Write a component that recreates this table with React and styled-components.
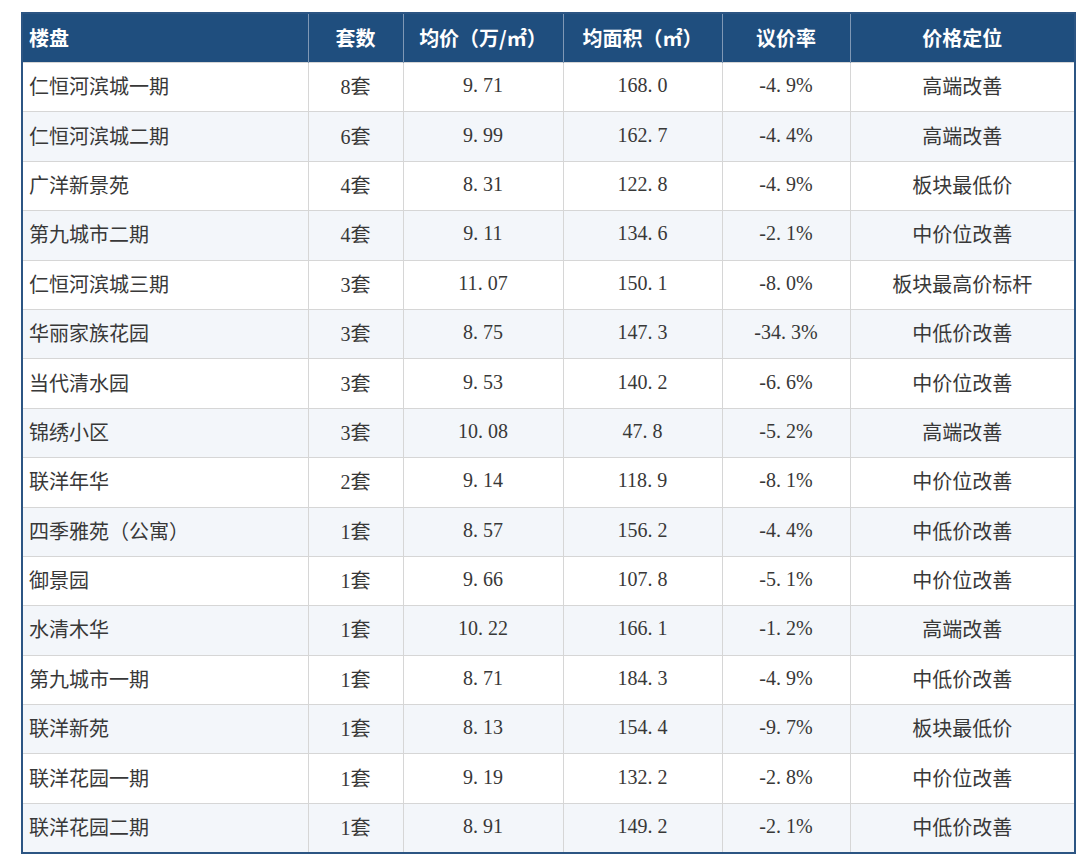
import React from "react";
import styled, { createGlobalStyle } from "styled-components";

const GlobalStyle = createGlobalStyle`
  body {
    margin: 0;
    background: #fff;
  }
`;

const Page = styled.div`
  padding: 12px 0 0 21px;
`;

const Table = styled.table`
  width: 1053px;
  table-layout: fixed;
  border-collapse: collapse;
  border: 2px solid #2c5583;
`;

const HeadCell = styled.th`
  height: 46px;
  padding: 0 6px 2px;
  background: #1f4e7e;
  color: #fff;
  font-family: "Noto Sans CJK SC", "Liberation Sans", sans-serif;
  font-weight: 700;
  font-size: 20px;
  text-align: ${(p) => (p.$left ? "left" : "center")};
  border-left: 1px solid #7f98b5;
  &:first-child {
    border-left: none;
  }
`;

const Row = styled.tr`
  height: 49.4px;
  background: ${(p) => (p.$alt ? "#f3f6fa" : "#fff")};
`;

const Cell = styled.td`
  padding: 0 6px 3px;
  border: 1px solid #d6d6d6;
  color: #383838;
  font-size: 20px;
  text-align: ${(p) => (p.$left ? "left" : "center")};
  font-family: ${(p) =>
    p.$num
      ? `"Liberation Serif", "Noto Sans CJK SC", serif`
      : `"Noto Sans CJK SC", "Liberation Serif", serif`};
  white-space: nowrap;
`;

const Count = styled.span`
  font-family: "Liberation Serif", "Noto Sans CJK SC", serif;
`;

// 宋体的半角小数点占一整格，这里补一点右边距
const Dot = styled.span`
  margin-right: 5px;
`;

const Num = ({ value }) => {
  const [head, tail] = value.split(".");
  return (
    <>
      {head}
      <Dot>.</Dot>
      {tail}
    </>
  );
};

const columns = [
  { title: "楼盘", width: 286, left: true },
  { title: "套数", width: 95 },
  { title: "均价（万/㎡）", width: 160 },
  { title: "均面积（㎡）", width: 159 },
  { title: "议价率", width: 128 },
  { title: "价格定位", width: 225 },
];

const rows = [
  ["仁恒河滨城一期", 8, "9.71", "168.0", "-4.9%", "高端改善"],
  ["仁恒河滨城二期", 6, "9.99", "162.7", "-4.4%", "高端改善"],
  ["广洋新景苑", 4, "8.31", "122.8", "-4.9%", "板块最低价"],
  ["第九城市二期", 4, "9.11", "134.6", "-2.1%", "中价位改善"],
  ["仁恒河滨城三期", 3, "11.07", "150.1", "-8.0%", "板块最高价标杆"],
  ["华丽家族花园", 3, "8.75", "147.3", "-34.3%", "中低价改善"],
  ["当代清水园", 3, "9.53", "140.2", "-6.6%", "中价位改善"],
  ["锦绣小区", 3, "10.08", "47.8", "-5.2%", "高端改善"],
  ["联洋年华", 2, "9.14", "118.9", "-8.1%", "中价位改善"],
  ["四季雅苑（公寓）", 1, "8.57", "156.2", "-4.4%", "中低价改善"],
  ["御景园", 1, "9.66", "107.8", "-5.1%", "中价位改善"],
  ["水清木华", 1, "10.22", "166.1", "-1.2%", "高端改善"],
  ["第九城市一期", 1, "8.71", "184.3", "-4.9%", "中低价改善"],
  ["联洋新苑", 1, "8.13", "154.4", "-9.7%", "板块最低价"],
  ["联洋花园一期", 1, "9.19", "132.2", "-2.8%", "中价位改善"],
  ["联洋花园二期", 1, "8.91", "149.2", "-2.1%", "中低价改善"],
];

const App = () => {
  return (
    <Page>
      <GlobalStyle />
      <Table>
        <colgroup>
          {columns.map((c) => (
            <col key={c.title} style={{ width: c.width }} />
          ))}
        </colgroup>
        <thead>
          <tr>
            {columns.map((c) => (
              <HeadCell key={c.title} $left={c.left}>
                {c.title}
              </HeadCell>
            ))}
          </tr>
        </thead>
        <tbody>
          {rows.map(([name, count, price, area, rate, level], i) => (
            <Row key={name} $alt={i % 2 === 1}>
              <Cell $left>{name}</Cell>
              <Cell>
                <Count>{count}</Count>套
              </Cell>
              <Cell $num>
                <Num value={price} />
              </Cell>
              <Cell $num>
                <Num value={area} />
              </Cell>
              <Cell $num>
                <Num value={rate} />
              </Cell>
              <Cell>{level}</Cell>
            </Row>
          ))}
        </tbody>
      </Table>
    </Page>
  );
};

export default App;
